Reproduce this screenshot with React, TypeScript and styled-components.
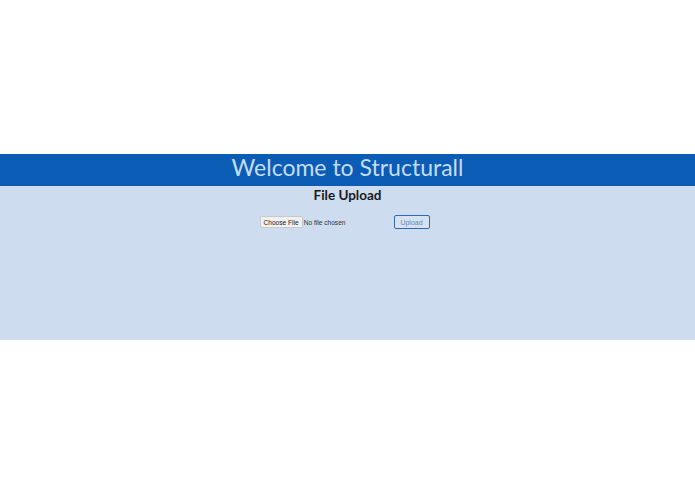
import React from "react";
import styled, { createGlobalStyle } from "styled-components";

const GlobalStyle = createGlobalStyle`
  html, body {
    margin: 0;
    padding: 0;
    background: #ffffff;
    font-family: Lato, "Liberation Sans", sans-serif;
  }
`;

const Page = styled.div`
  padding-top: 154px;
`;

const Banner = styled.header`
  height: 32px;
  background-color: #0b5cb5;
  display: flex;
  align-items: center;
  justify-content: center;
`;

const Title = styled.h1`
  margin: 0 0 6px;
  font-family: Lato, sans-serif;
  font-weight: 400;
  font-size: 23px;
  line-height: 26px;
  color: #c6dcf5;
`;

const Panel = styled.main`
  height: 154px;
  background-color: #cddcee;
  display: flex;
  flex-direction: column;
  align-items: center;
`;

const Heading = styled.h2`
  margin: 1px 0 0;
  font-family: Lato, sans-serif;
  font-weight: 700;
  font-size: 13.5px;
  line-height: 16px;
  color: #1a1a1a;
`;

const UploadForm = styled.form`
  margin-top: 12px;
  display: flex;
  align-items: center;
  gap: 6px;
  margin-left: -6px;
`;

const FileInput = styled.input`
  width: 128px;
  font-family: "Liberation Sans", Arial, sans-serif;
  font-size: 6.6px;
  color: #333;

  &::file-selector-button {
    font-family: "Liberation Sans", Arial, sans-serif;
    font-size: 6.6px;
    height: 12px;
    padding: 0 3px;
    margin-right: 1px;
    border: 1px solid #c9c9c9;
    border-radius: 2px;
    background: #f0f0f0;
    color: #222;
  }
`;

const UploadButton = styled.button`
  height: 14px;
  width: 36px;
  padding: 0;
  font-family: "Liberation Sans", Arial, sans-serif;
  font-size: 7px;
  color: #6d87a8;
  background: #d6e2f1;
  border: 1px solid #2f6bb4;
  border-radius: 2px;
`;

export default function App() {
  return (
    <Page>
      <GlobalStyle />
      <Banner>
        <Title>Welcome to Structurall</Title>
      </Banner>
      <Panel>
        <Heading>File Upload</Heading>
        <UploadForm onSubmit={(e) => e.preventDefault()}>
          <FileInput type="file" />
          <UploadButton type="submit">Upload</UploadButton>
        </UploadForm>
      </Panel>
    </Page>
  );
}
